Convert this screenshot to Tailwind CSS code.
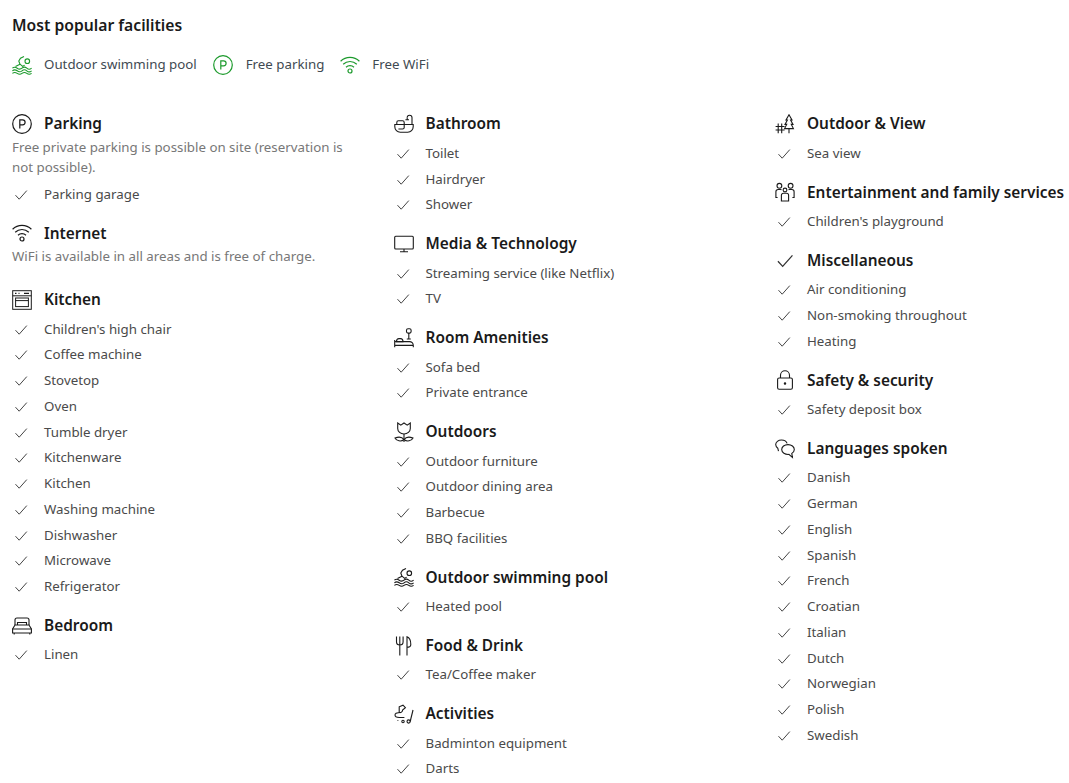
<!doctype html>
<html lang="en">
<head>
<meta charset="utf-8">
<title>Facilities</title>
<script src="https://cdn.jsdelivr.net/npm/@tailwindcss/browser@4"></script>
</head>
<body class="bg-white">
<svg width="0" height="0" class="absolute">
  <defs>
    <symbol id="check" viewBox="0 0 14 14"><path d="M1.500 7.200 L5.200 11.200 L12.800 2.600" fill="none" stroke="currentColor" stroke-width="1"/></symbol>
    <symbol id="pin" viewBox="0 0 20 20"><g fill="none" stroke="currentColor" stroke-width="1.200"><circle cx="10" cy="10" r="9.300"/><path d="M7.800 14.500V5.800h2.800a2.500 2.500 0 0 1 0 5H7.800"/></g></symbol>
    <symbol id="wifi" viewBox="0 0 20 20"><g fill="none" stroke="currentColor" stroke-width="1.200"><path d="M.6 6.200C5.800 1.200 14.200 1.200 19.400 6.200"/><path d="M3.200 9.200C7 5.600 13 5.600 16.800 9.200"/><path d="M6 12.200C8.200 10.200 11.800 10.200 14 12.200"/><circle cx="10" cy="16" r="2"/></g></symbol>
    <symbol id="pool" viewBox="0 0 20 20"><g fill="none" stroke="currentColor" stroke-width="1.100"><path d="M3.500 11.500 8 9.200 6.800 6 8.500 3.200 12 1.500M8 9.200l2.600 2.200 2-1.200"/><circle cx="15.300" cy="6.200" r="2.300"/><path d="M.4 13.200c1.600-1.400 3-1.400 4.800 0s3.200 1.400 4.800 0 3.200-1.400 4.800 0 3.200 1.400 4.800 0"/><path d="M.4 15.800c1.600-1.400 3-1.400 4.800 0s3.200 1.400 4.800 0 3.200-1.400 4.800 0 3.200 1.400 4.800 0"/><path d="M.4 18.400c1.600-1.200 3-1.200 4.800 0s3.200 1.200 4.800 0 3.200-1.200 4.800 0 3.200 1.200 4.800 0"/></g></symbol>
    <symbol id="oven" viewBox="0 0 20 20"><g fill="none" stroke="currentColor" stroke-width="1"><rect x=".7" y=".7" width="18.600" height="18.600"/><path d="M.7 5.800h18.600"/><path d="M3 3.300h1.500M6.500 3.300h1M12 3.300h5" stroke-width="1.200"/><rect x="3.600" y="8" width="12.800" height="8.600"/><path d="M3.600 10.600h12.800"/></g></symbol>
    <symbol id="bed" viewBox="0 0 20 20"><g fill="none" stroke="currentColor" stroke-width="1.100"><path d="M3 9V4a2 2 0 0 1 2-2h10a2 2 0 0 1 2 2v5"/><path d="M5.500 9V6.500h9V9"/><path d="M3 9h14l2.400 4v4H.6v-4z"/><path d="M.6 13h18.800M2.200 17v1.600M17.800 17v1.600"/></g></symbol>
    <symbol id="bath" viewBox="0 0 20 20"><g fill="none" stroke="currentColor" stroke-width="1.100"><path d="M.8 10.500h18.400v2.300a5.500 5.500 0 0 1-5.500 5.500H6.300a5.500 5.500 0 0 1-5.500-5.500z"/><path d="M2.800 10.500V8.400a1.600 1.600 0 0 1 1.600-1.600h4.200a1.600 1.600 0 0 1 1.600 1.600v5a1.600 1.600 0 0 1-1.600 1.600H4.400"/><path d="M18 10.500V3.600a2.400 2.400 0 0 0-4.800 0"/><path d="M11.400 5.800h3.600M13.200 3.600V5.800"/></g></symbol>
    <symbol id="tv" viewBox="0 0 20 20"><g fill="none" stroke="currentColor" stroke-width="1.100"><rect x=".7" y="2.200" width="18.600" height="12.800" rx="1"/><path d="M10 15v2.600M6 17.800h8"/></g></symbol>
    <symbol id="amen" viewBox="0 0 20 20"><g fill="none" stroke="currentColor" stroke-width="1.100"><rect x="12.500" y=".7" width="4.600" height="4.400" rx="1.500"/><path d="M14.800 5.100V11M12.800 11h4"/><path d="M2.500 13.600c0-2 1-3 2.500-3h1.500c1.500 0 2.500 1 2.500 3z"/><path d="M.7 19.300V12M.7 13.600H15.500a3.800 3.800 0 0 1 3.800 3.800v1.900M.7 17.400H19.300"/></g></symbol>
    <symbol id="tulip" viewBox="0 0 20 20"><g fill="none" stroke="currentColor" stroke-width="1.100"><path d="M3.700 1 6.800 3.200 10 1l3.200 2.200L16.300 1v5.500a6.300 5.500 0 0 1-12.600 0z"/><path d="M10 12v8"/><path d="M10 17.500c-1.500-2-5-3-9-1.500 1.500 3 6 4 9 1.500z"/><path d="M10 17.500c1.500-2 5-3 9-1.500-1.500 3-6 4-9 1.500z"/></g></symbol>
    <symbol id="food" viewBox="0 0 20 20"><g fill="none" stroke="currentColor" stroke-width="1.100"><path d="M2.500.5v5.200a3.300 3.300 0 0 0 6.600 0V.5M5.800.5v19"/><path d="M13 19.500V.8c2.600 1 3.800 4 3.800 7.600 0 1.800-1.200 2.800-3.800 2.800"/></g></symbol>
    <symbol id="act" viewBox="0 0 20 20"><g fill="none" stroke="currentColor" stroke-width="1.100"><path d="M5.200 8.500V2.800L9 1.200l2.400 2.400-2.800 2.400a2.700 2.700 0 0 1-3.400 2.500z"/><path d="M5 8.800c-2.400-.2-4 .6-4 2.200s2 2.500 4.200 2.500h5.200"/><circle cx="9" cy="17.500" r="1.200"/><circle cx="14.600" cy="17.500" r="1.600"/><path d="M16.200 17.500 19 6"/><path d="M3.500 16.500h.8"/></g></symbol>
    <symbol id="view" viewBox="0 0 20 20"><g fill="none" stroke="currentColor" stroke-width="1.100"><path d="M14 .8 11 6h1.400L10 10.400h1.700L9.600 14.600h8.800L16.300 10.400H18L15.600 6H17z"/><path d="M14 14.600v4.600"/><path d="M3.200 9.500v9.700M6.700 9.500v9.700M.6 12.500h9M.6 16h9"/></g></symbol>
    <symbol id="fam" viewBox="0 0 20 20"><g fill="none" stroke="currentColor" stroke-width="1.100"><circle cx="4.400" cy="3.800" r="2.400"/><circle cx="15.600" cy="3.800" r="2.400"/><circle cx="10" cy="8" r="1.900"/><path d="M2.600 15.500H.9V9.800a2.300 2.300 0 0 1 2.300-2.300h2.300a2.300 2.300 0 0 1 1 .3"/><path d="M17.400 15.500h1.700V9.800a2.300 2.300 0 0 0-2.300-2.300h-2.300a2.300 2.300 0 0 0-1 .3"/><path d="M6.400 19V13.300a2 2 0 0 1 2-2h3.200a2 2 0 0 1 2 2V19z"/></g></symbol>
    <symbol id="lock" viewBox="0 0 20 20"><g fill="none" stroke="currentColor" stroke-width="1.100"><rect x="2.600" y="8" width="14.800" height="11.300" rx="1.500"/><path d="M5.500 8V5.200a4.500 4.500 0 0 1 9 0V8"/><circle cx="10" cy="13.600" r=".7" fill="currentColor"/></g></symbol>
    <symbol id="lang" viewBox="0 0 20 20"><g fill="none" stroke="currentColor" stroke-width="1.100"><path d="M3.500 12.200 2.800 9.200C1.500 8.200.7 6.900.7 5.600.7 3 3.300 1 6.500 1c2.700 0 5 1.400 5.600 3.400"/><path d="M13 5.600c3.500 0 6.300 2.200 6.300 4.900 0 1.600-1 3-2.500 3.900l.6 4-3.500-3c-3.800.3-7.200-1.800-7.200-4.900 0-2.700 2.800-4.900 6.300-4.900z"/></g></symbol>
  </defs>
</svg>

<div class="w-[1069px] h-[783px] overflow-hidden pt-[13px] px-3 font-['Noto_Sans','Open_Sans',sans-serif] text-[13.300px] text-[#4a4a4a]">
  <h2 class="h-6 leading-6 text-[15.700px] font-semibold text-[#1a1a1a]">Most popular facilities</h2>
  <div class="mt-4 h-6 flex items-center text-[#3f4a52]">
    <svg class="w-5 h-5 text-[#1c9a2c]"><use href="#pool"/></svg><span class="ml-3">Outdoor swimming pool</span>
    <svg class="w-5 h-5 ml-4 text-[#1c9a2c]"><use href="#pin"/></svg><span class="ml-[13px]">Free parking</span>
    <svg class="w-5 h-5 ml-4 text-[#1c9a2c]"><use href="#wifi"/></svg><span class="ml-3">Free WiFi</span>
  </div>

  <div class="mt-[34px] grid grid-cols-[381.500px_381.500px_1fr]">
    <div class="flex flex-col">
      <section class="mb-[12.500px]">
        <h3 class="h-[26px] mb-1 flex items-center gap-3 text-[15.400px] font-semibold text-[#1a1a1a]"><svg class="w-5 h-5 shrink-0"><use href="#pin"/></svg>Parking</h3>
        <p class="w-[340px] leading-5 text-[#777] -mt-1 mb-[5px]">Free private parking is possible on site (reservation is not possible).</p>
        <div class="h-[25.750px] flex items-center gap-4"><svg class="ml-[2px] w-[14px] h-[14px] text-[#444] shrink-0"><use href="#check"/></svg>Parking garage</div>
      </section>
      <section class="mb-[12.500px]">
        <h3 class="h-[26px] mb-1 flex items-center gap-3 text-[15.400px] font-semibold text-[#1a1a1a]"><svg class="w-5 h-5 shrink-0"><use href="#wifi"/></svg>Internet</h3>
        <p class="leading-5 text-[#777] -mt-1 mb-2">WiFi is available in all areas and is free of charge.</p>
      </section>
      <section class="mb-[12.500px]">
        <h3 class="h-[26px] mb-1 flex items-center gap-3 text-[15.400px] font-semibold text-[#1a1a1a]"><svg class="w-5 h-5 shrink-0"><use href="#oven"/></svg>Kitchen</h3>
        <div class="h-[25.750px] flex items-center gap-4"><svg class="ml-[2px] w-[14px] h-[14px] text-[#444] shrink-0"><use href="#check"/></svg>Children's high chair</div>
        <div class="h-[25.750px] flex items-center gap-4"><svg class="ml-[2px] w-[14px] h-[14px] text-[#444] shrink-0"><use href="#check"/></svg>Coffee machine</div>
        <div class="h-[25.750px] flex items-center gap-4"><svg class="ml-[2px] w-[14px] h-[14px] text-[#444] shrink-0"><use href="#check"/></svg>Stovetop</div>
        <div class="h-[25.750px] flex items-center gap-4"><svg class="ml-[2px] w-[14px] h-[14px] text-[#444] shrink-0"><use href="#check"/></svg>Oven</div>
        <div class="h-[25.750px] flex items-center gap-4"><svg class="ml-[2px] w-[14px] h-[14px] text-[#444] shrink-0"><use href="#check"/></svg>Tumble dryer</div>
        <div class="h-[25.750px] flex items-center gap-4"><svg class="ml-[2px] w-[14px] h-[14px] text-[#444] shrink-0"><use href="#check"/></svg>Kitchenware</div>
        <div class="h-[25.750px] flex items-center gap-4"><svg class="ml-[2px] w-[14px] h-[14px] text-[#444] shrink-0"><use href="#check"/></svg>Kitchen</div>
        <div class="h-[25.750px] flex items-center gap-4"><svg class="ml-[2px] w-[14px] h-[14px] text-[#444] shrink-0"><use href="#check"/></svg>Washing machine</div>
        <div class="h-[25.750px] flex items-center gap-4"><svg class="ml-[2px] w-[14px] h-[14px] text-[#444] shrink-0"><use href="#check"/></svg>Dishwasher</div>
        <div class="h-[25.750px] flex items-center gap-4"><svg class="ml-[2px] w-[14px] h-[14px] text-[#444] shrink-0"><use href="#check"/></svg>Microwave</div>
        <div class="h-[25.750px] flex items-center gap-4"><svg class="ml-[2px] w-[14px] h-[14px] text-[#444] shrink-0"><use href="#check"/></svg>Refrigerator</div>
      </section>
      <section>
        <h3 class="h-[26px] mb-1 flex items-center gap-3 text-[15.400px] font-semibold text-[#1a1a1a]"><svg class="w-5 h-5 shrink-0"><use href="#bed"/></svg>Bedroom</h3>
        <div class="h-[25.750px] flex items-center gap-4"><svg class="ml-[2px] w-[14px] h-[14px] text-[#444] shrink-0"><use href="#check"/></svg>Linen</div>
      </section>
    </div>

    <div class="flex flex-col">
      <section class="mb-[12.500px]">
        <h3 class="h-[26px] mb-1 flex items-center gap-3 text-[15.400px] font-semibold text-[#1a1a1a]"><svg class="w-5 h-5 shrink-0"><use href="#bath"/></svg>Bathroom</h3>
        <div class="h-[25.750px] flex items-center gap-4"><svg class="ml-[2px] w-[14px] h-[14px] text-[#444] shrink-0"><use href="#check"/></svg>Toilet</div>
        <div class="h-[25.750px] flex items-center gap-4"><svg class="ml-[2px] w-[14px] h-[14px] text-[#444] shrink-0"><use href="#check"/></svg>Hairdryer</div>
        <div class="h-[25.750px] flex items-center gap-4"><svg class="ml-[2px] w-[14px] h-[14px] text-[#444] shrink-0"><use href="#check"/></svg>Shower</div>
      </section>
      <section class="mb-[12.500px]">
        <h3 class="h-[26px] mb-1 flex items-center gap-3 text-[15.400px] font-semibold text-[#1a1a1a]"><svg class="w-5 h-5 shrink-0"><use href="#tv"/></svg>Media &amp; Technology</h3>
        <div class="h-[25.750px] flex items-center gap-4"><svg class="ml-[2px] w-[14px] h-[14px] text-[#444] shrink-0"><use href="#check"/></svg>Streaming service (like Netflix)</div>
        <div class="h-[25.750px] flex items-center gap-4"><svg class="ml-[2px] w-[14px] h-[14px] text-[#444] shrink-0"><use href="#check"/></svg>TV</div>
      </section>
      <section class="mb-[12.500px]">
        <h3 class="h-[26px] mb-1 flex items-center gap-3 text-[15.400px] font-semibold text-[#1a1a1a]"><svg class="w-5 h-5 shrink-0"><use href="#amen"/></svg>Room Amenities</h3>
        <div class="h-[25.750px] flex items-center gap-4"><svg class="ml-[2px] w-[14px] h-[14px] text-[#444] shrink-0"><use href="#check"/></svg>Sofa bed</div>
        <div class="h-[25.750px] flex items-center gap-4"><svg class="ml-[2px] w-[14px] h-[14px] text-[#444] shrink-0"><use href="#check"/></svg>Private entrance</div>
      </section>
      <section class="mb-[12.500px]">
        <h3 class="h-[26px] mb-1 flex items-center gap-3 text-[15.400px] font-semibold text-[#1a1a1a]"><svg class="w-5 h-5 shrink-0"><use href="#tulip"/></svg>Outdoors</h3>
        <div class="h-[25.750px] flex items-center gap-4"><svg class="ml-[2px] w-[14px] h-[14px] text-[#444] shrink-0"><use href="#check"/></svg>Outdoor furniture</div>
        <div class="h-[25.750px] flex items-center gap-4"><svg class="ml-[2px] w-[14px] h-[14px] text-[#444] shrink-0"><use href="#check"/></svg>Outdoor dining area</div>
        <div class="h-[25.750px] flex items-center gap-4"><svg class="ml-[2px] w-[14px] h-[14px] text-[#444] shrink-0"><use href="#check"/></svg>Barbecue</div>
        <div class="h-[25.750px] flex items-center gap-4"><svg class="ml-[2px] w-[14px] h-[14px] text-[#444] shrink-0"><use href="#check"/></svg>BBQ facilities</div>
      </section>
      <section class="mb-[12.500px]">
        <h3 class="h-[26px] mb-1 flex items-center gap-3 text-[15.400px] font-semibold text-[#1a1a1a]"><svg class="w-5 h-5 shrink-0"><use href="#pool"/></svg>Outdoor swimming pool</h3>
        <div class="h-[25.750px] flex items-center gap-4"><svg class="ml-[2px] w-[14px] h-[14px] text-[#444] shrink-0"><use href="#check"/></svg>Heated pool</div>
      </section>
      <section class="mb-[12.500px]">
        <h3 class="h-[26px] mb-1 flex items-center gap-3 text-[15.400px] font-semibold text-[#1a1a1a]"><svg class="w-5 h-5 shrink-0"><use href="#food"/></svg>Food &amp; Drink</h3>
        <div class="h-[25.750px] flex items-center gap-4"><svg class="ml-[2px] w-[14px] h-[14px] text-[#444] shrink-0"><use href="#check"/></svg>Tea/Coffee maker</div>
      </section>
      <section>
        <h3 class="h-[26px] mb-1 flex items-center gap-3 text-[15.400px] font-semibold text-[#1a1a1a]"><svg class="w-5 h-5 shrink-0"><use href="#act"/></svg>Activities</h3>
        <div class="h-[25.750px] flex items-center gap-4"><svg class="ml-[2px] w-[14px] h-[14px] text-[#444] shrink-0"><use href="#check"/></svg>Badminton equipment</div>
        <div class="h-[25.750px] flex items-center gap-4"><svg class="ml-[2px] w-[14px] h-[14px] text-[#444] shrink-0"><use href="#check"/></svg>Darts</div>
      </section>
    </div>

    <div class="flex flex-col">
      <section class="mb-[12.500px]">
        <h3 class="h-[26px] mb-1 flex items-center gap-3 text-[15.400px] font-semibold text-[#1a1a1a]"><svg class="w-5 h-5 shrink-0"><use href="#view"/></svg>Outdoor &amp; View</h3>
        <div class="h-[25.750px] flex items-center gap-4"><svg class="ml-[2px] w-[14px] h-[14px] text-[#444] shrink-0"><use href="#check"/></svg>Sea view</div>
      </section>
      <section class="mb-[12.500px]">
        <h3 class="h-[26px] mb-1 flex items-center gap-3 text-[15.400px] font-semibold text-[#1a1a1a] whitespace-nowrap"><svg class="w-5 h-5 shrink-0"><use href="#fam"/></svg>Entertainment and family services</h3>
        <div class="h-[25.750px] flex items-center gap-4"><svg class="ml-[2px] w-[14px] h-[14px] text-[#444] shrink-0"><use href="#check"/></svg>Children's playground</div>
      </section>
      <section class="mb-[12.500px]">
        <h3 class="h-[26px] mb-1 flex items-center gap-3 text-[15.400px] font-semibold text-[#1a1a1a]"><svg class="ml-[1px] w-[18px] h-[18px] mr-[1px] shrink-0 text-[#333]"><use href="#check"/></svg>Miscellaneous</h3>
        <div class="h-[25.750px] flex items-center gap-4"><svg class="ml-[2px] w-[14px] h-[14px] text-[#444] shrink-0"><use href="#check"/></svg>Air conditioning</div>
        <div class="h-[25.750px] flex items-center gap-4"><svg class="ml-[2px] w-[14px] h-[14px] text-[#444] shrink-0"><use href="#check"/></svg>Non-smoking throughout</div>
        <div class="h-[25.750px] flex items-center gap-4"><svg class="ml-[2px] w-[14px] h-[14px] text-[#444] shrink-0"><use href="#check"/></svg>Heating</div>
      </section>
      <section class="mb-[12.500px]">
        <h3 class="h-[26px] mb-1 flex items-center gap-3 text-[15.400px] font-semibold text-[#1a1a1a]"><svg class="w-5 h-5 shrink-0"><use href="#lock"/></svg>Safety &amp; security</h3>
        <div class="h-[25.750px] flex items-center gap-4"><svg class="ml-[2px] w-[14px] h-[14px] text-[#444] shrink-0"><use href="#check"/></svg>Safety deposit box</div>
      </section>
      <section>
        <h3 class="h-[26px] mb-1 flex items-center gap-3 text-[15.400px] font-semibold text-[#1a1a1a]"><svg class="w-5 h-5 shrink-0"><use href="#lang"/></svg>Languages spoken</h3>
        <div class="h-[25.750px] flex items-center gap-4"><svg class="ml-[2px] w-[14px] h-[14px] text-[#444] shrink-0"><use href="#check"/></svg>Danish</div>
        <div class="h-[25.750px] flex items-center gap-4"><svg class="ml-[2px] w-[14px] h-[14px] text-[#444] shrink-0"><use href="#check"/></svg>German</div>
        <div class="h-[25.750px] flex items-center gap-4"><svg class="ml-[2px] w-[14px] h-[14px] text-[#444] shrink-0"><use href="#check"/></svg>English</div>
        <div class="h-[25.750px] flex items-center gap-4"><svg class="ml-[2px] w-[14px] h-[14px] text-[#444] shrink-0"><use href="#check"/></svg>Spanish</div>
        <div class="h-[25.750px] flex items-center gap-4"><svg class="ml-[2px] w-[14px] h-[14px] text-[#444] shrink-0"><use href="#check"/></svg>French</div>
        <div class="h-[25.750px] flex items-center gap-4"><svg class="ml-[2px] w-[14px] h-[14px] text-[#444] shrink-0"><use href="#check"/></svg>Croatian</div>
        <div class="h-[25.750px] flex items-center gap-4"><svg class="ml-[2px] w-[14px] h-[14px] text-[#444] shrink-0"><use href="#check"/></svg>Italian</div>
        <div class="h-[25.750px] flex items-center gap-4"><svg class="ml-[2px] w-[14px] h-[14px] text-[#444] shrink-0"><use href="#check"/></svg>Dutch</div>
        <div class="h-[25.750px] flex items-center gap-4"><svg class="ml-[2px] w-[14px] h-[14px] text-[#444] shrink-0"><use href="#check"/></svg>Norwegian</div>
        <div class="h-[25.750px] flex items-center gap-4"><svg class="ml-[2px] w-[14px] h-[14px] text-[#444] shrink-0"><use href="#check"/></svg>Polish</div>
        <div class="h-[25.750px] flex items-center gap-4"><svg class="ml-[2px] w-[14px] h-[14px] text-[#444] shrink-0"><use href="#check"/></svg>Swedish</div>
      </section>
    </div>
  </div>
</div>
</body>
</html>
